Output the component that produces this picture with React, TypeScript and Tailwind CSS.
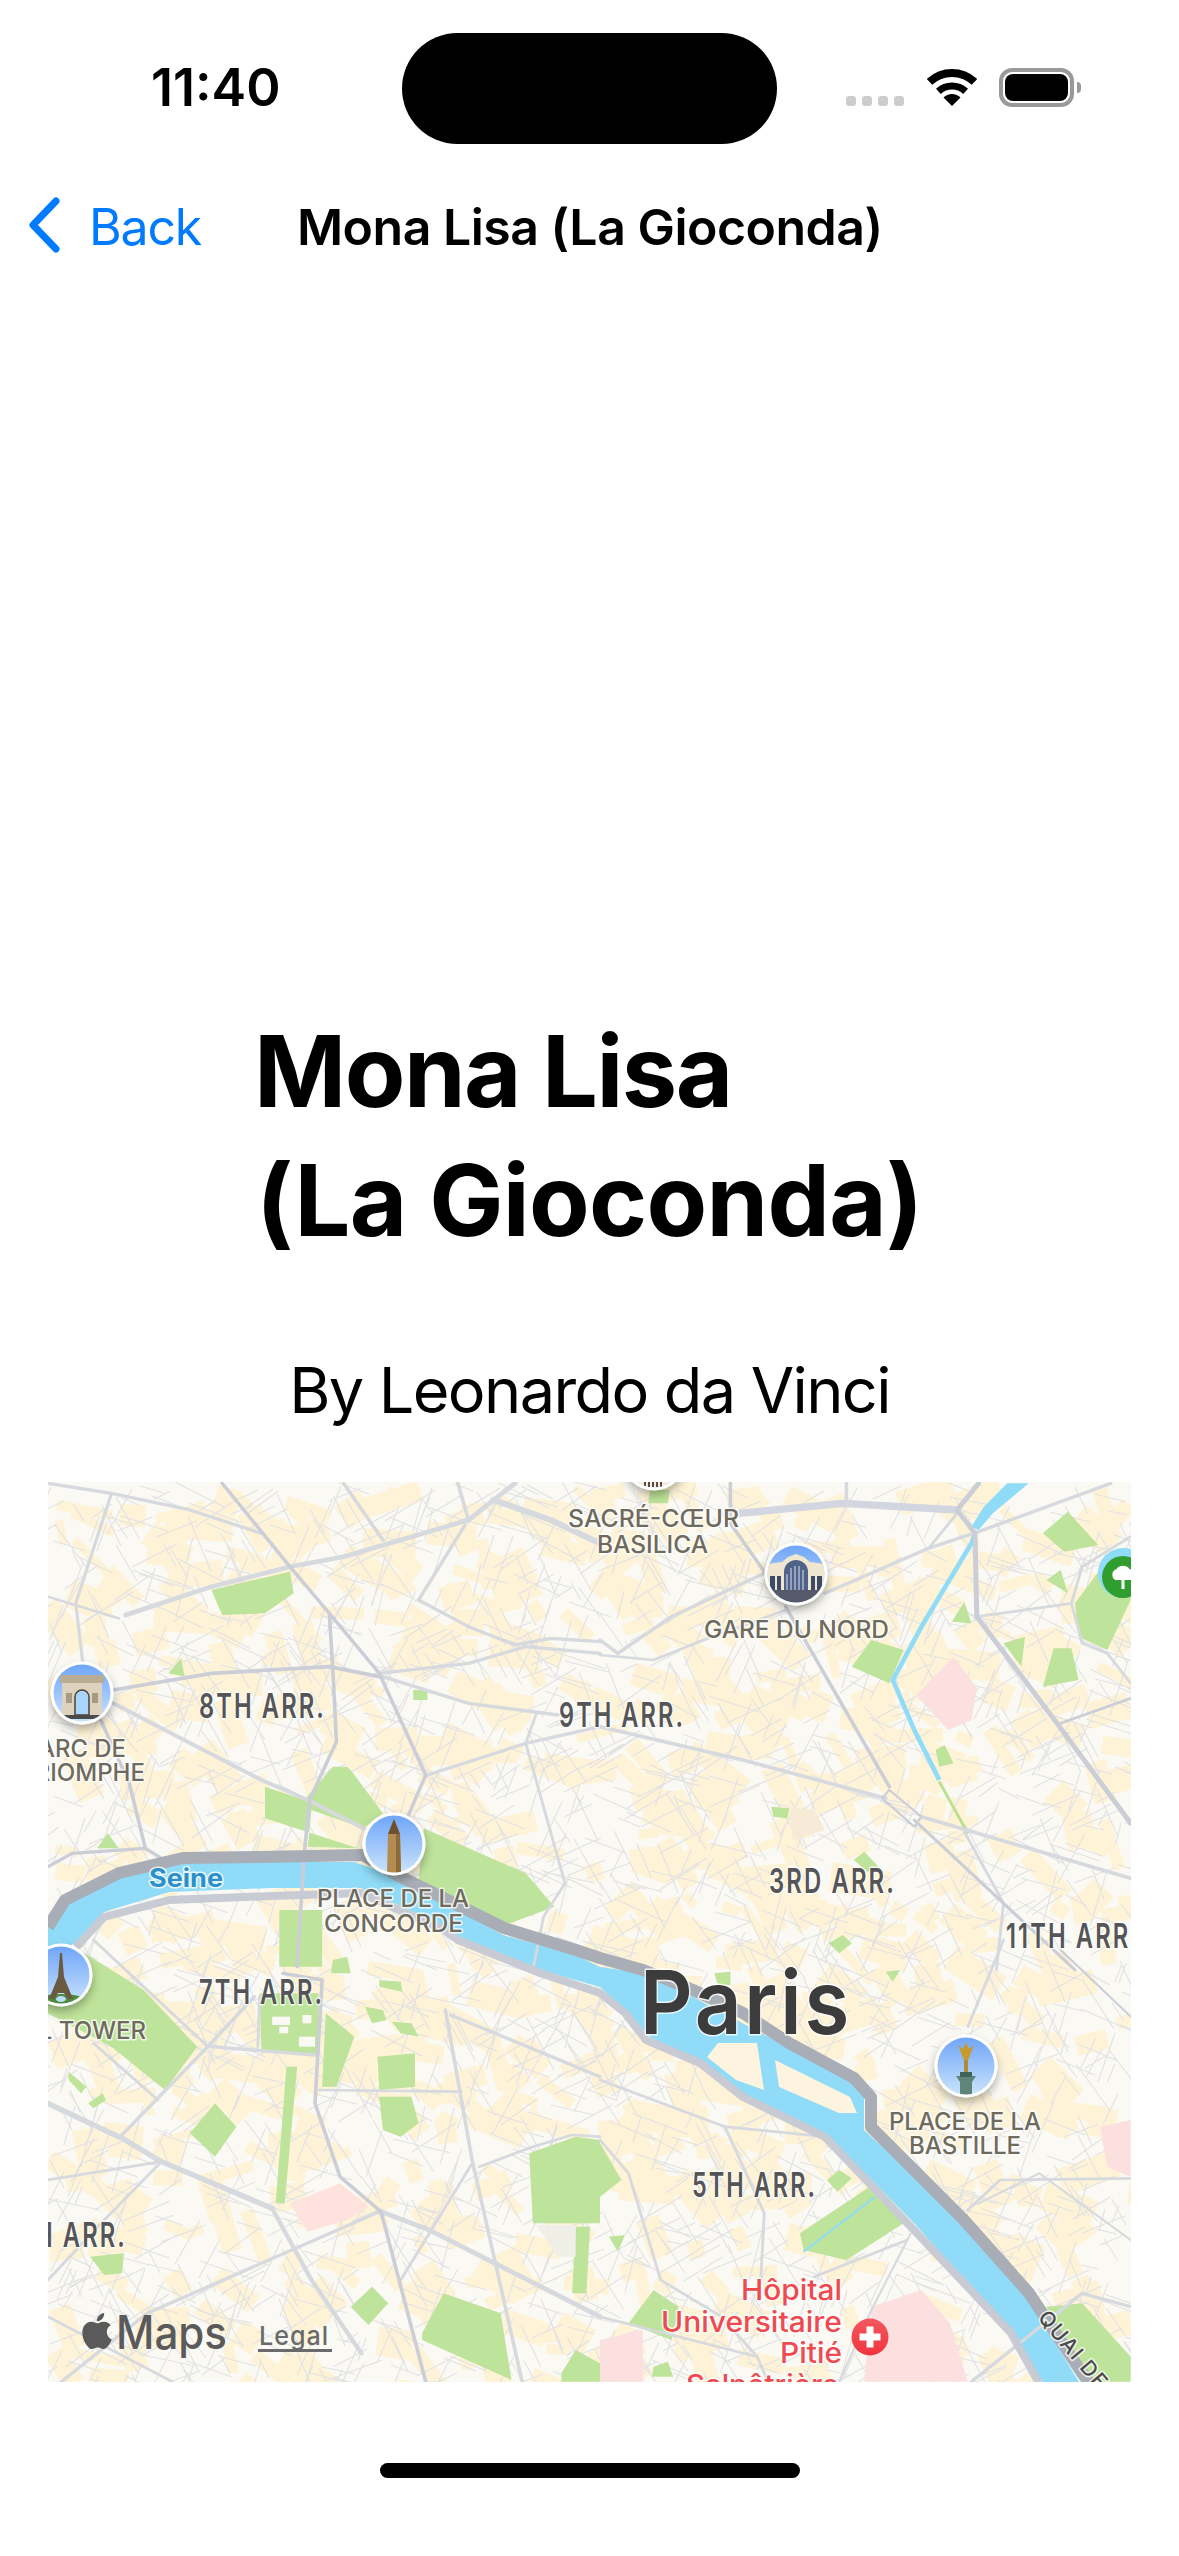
import React from 'react';

// quadrant transforms: the map coordinates below were read off four crops of the map
const QA = 'translate(40 1470) scale(0.35714 0.33333)';
const QB = 'translate(600 1470) scale(0.35714 0.33333)';
const QC = 'translate(40 1940) scale(0.35714 0.33333)';
const QD = 'translate(600 1940) scale(0.35714 0.33333)';

const ROAD = '#D6D9DD';
const DARK = '#CBCDD7';

type Road = [string, number, string?];

const roadsA: Road[] = [
  ['22,40 200,70 420,120 620,190', 10],
  ['200,70 100,400 120,580', 9],
  ['22,380 220,445', 8],
  ['240,435 480,350 700,290 850,260 1200,150 1270,90 1330,40', 14],
  ['1270,90 1430,150 1568,220', 18],
  ['1170,40 1200,150', 10],
  ['850,40 960,210', 10],
  ['950,610 1200,580 1360,530 1568,550', 10],
  ['960,620 1200,700 1450,735', 10],
  ['1060,390 1190,165', 10],
  ['1060,390 1200,470 1330,525 1430,505 1568,515', 10],
  ['1085,915 1360,820 1568,770', 10],
  ['1390,730 1360,820 1470,1240 1410,1340 1380,1500', 8],
  ['205,700 620,930 750,990 905,1075', 12],
  ['510,40 700,290 810,430 950,610 1080,915 1030,1040', 10, DARK],
  ['810,430 820,600 830,815 755,990 740,1150 720,1490', 10, DARK],
  ['205,660 480,610 810,590 950,620', 11, DARK],
  ['170,750 250,940 295,1135 340,1165', 10, DARK],
  ['22,1190 90,1150 295,1135', 10, DARK],
];

const roadsB: Road[] = [
  ['390,130 680,100 1000,120', 22, '#D3D6E0'],
  ['690,40 690,100', 10],
  ['1000,130 920,235', 8],
  ['1430,40 1060,185 920,235 630,370', 10],
  ['460,310 200,440 50,550 0,510', 10],
  ['0,555 150,570 290,510 520,420', 8],
  ['1055,440 1320,400', 8],
  ['1486,200 1350,290 1320,400 1350,520 1420,550 1486,640', 8],
  ['1290,760 1486,685', 8, DARK],
  ['0,770 400,870 800,985', 11],
  ['900,1040 1486,1225', 11],
  ['1020,1085 1130,1300 1110,1500', 8],
  ['365,40 365,160 470,320', 10, DARK],
  ['520,410 810,950', 10, DARK],
  ['1060,40 1000,120 1050,190 1055,440 1280,760 1486,1060', 14, DARK],
  ['790,985 880,1070 900,1040 810,960 790,985', 6, DARK],
  ['880,1050 1130,1300 1330,1500', 9, DARK],
];

const roadsC: Road[] = [
  ['150,0 470,320', 8],
  ['600,170 470,320 225,590', 10],
  ['480,320 770,345', 10],
  ['150,310 330,480', 8],
  ['22,490 230,595 340,665 650,805', 16],
  ['22,720 340,665', 8],
  ['340,665 180,840 22,1020', 8],
  ['650,805 760,1020 900,1240', 12],
  ['780,450 1180,455', 8],
  ['1150,225 1568,410', 10],
  ['22,1130 370,1325', 8],
  ['950,815 300,1120 60,1325', 10],
  ['955,815 1090,870 1568,1130', 14],
  ['1210,670 1090,880 1010,1020', 8],
  ['1230,680 1380,620 1490,585 1568,590', 8],
  ['615,170 610,320', 8],
  ['680,100 790,120 770,490 840,710 955,815 1080,1325', 10, DARK],
  ['1135,210 1210,660 1350,1325', 10],
];

const roadsD: Road[] = [
  ['0,420 350,560 630,590', 8],
  ['350,560 460,820 450,1020', 8],
  ['0,600 80,700 170,1020 340,1130 440,1250 470,1325', 8],
  ['0,1130 440,1250', 8],
  ['600,1010 860,900', 8],
  ['870,880 760,1110 670,1325', 6],
  ['1030,810 1120,720 1486,715', 8],
  ['1030,260 1130,0', 8],
  ['1290,30 1486,230', 6, DARK],
  ['1040,1325 1350,1060 1486,1100', 10],
  ['1060,790 1230,700 1486,900', 6],
];

const parksA = [
  '480,360 700,305 710,370 630,430 510,435',
  '630,950 740,990 820,890 860,890 870,900 960,1030 905,1075 760,1020 750,1130 890,1135 630,1045',
  '1075,1075 1360,1210 1440,1310 1290,1370 1060,1230',
  '360,610 395,565 405,620',
  '1045,660 1085,660 1085,690 1045,690',
  '160,1135 190,1090 220,1135',
  '670,1320 790,1320 790,1490 670,1490',
];
const parksB = [
  '1240,190 1310,125 1395,225 1300,245',
  '1250,330 1290,300 1310,370',
  '705,590 760,510 850,540 810,640',
  '985,455 1020,395 1040,460',
  '1130,520 1190,500 1180,590',
  '1240,650 1270,535 1320,535 1340,630',
  '1330,400 1420,270 1486,260 1486,390 1420,540 1340,500',
  '940,840 965,825 990,880 950,890',
  '480,1010 530,1015 525,1045 485,1040',
  '710,1170 740,1145 780,1190 750,1205',
  '640,1420 680,1395 705,1420 670,1450',
  '140,60 195,60 190,100 135,100',
];
const parksC = [
  '110,30 290,150 440,320 350,450 200,320 22,220 22,120',
  '615,160 780,160 780,350 620,330',
  '800,220 880,290 830,440 790,440',
  '945,350 1050,340 1050,440 950,450',
  '950,470 1040,470 1060,550 1010,590 960,570',
  '420,580 490,490 550,560 490,650',
  '690,380 720,380 685,790 660,790',
  '1370,640 1500,590 1568,600 1568,850 1380,850',
  '1500,860 1540,860 1530,1060 1490,1060',
  '1070,1180 1130,1060 1290,1120 1320,1320 1070,1200',
  '870,1100 930,1040 975,1090 920,1155',
  '1460,1300 1500,1230 1568,1270 1568,1325 1460,1325',
  '140,950 235,940 230,1000 180,1005',
  '910,200 960,210 970,240 930,250',
  '985,245 1040,250 1060,290 1010,280',
  '950,120 1010,125 1015,155 950,140',
  '820,60 860,50 870,100 815,100',
  '80,395 130,440 115,460 80,420',
  '135,490 175,460 185,480 150,505',
];
const parksD = [
  '560,880 770,730 850,850 690,960 570,930',
  '0,610 60,720 0,770',
  '80,1150 150,1050 220,1100 200,1200',
  '1250,1100 1350,1090 1486,1250 1486,1325 1370,1325 1280,1170',
  '310,350 350,340 340,400',
  '405,400 450,400 460,450 420,445',
  '635,720 670,690 705,715 665,755',
  '150,1280 190,1265 205,1310 145,1310',
  '25,890 70,885 50,935',
  '320,100 365,95 365,135 330,135',
  '800,95 840,90 820,125',
];
const parkWhite = ['650,230 700,230 700,255 650,255', '735,225 760,225 760,250 735,250', '670,260 695,260 695,280 670,280', '725,290 770,290 770,320 725,320'];
const pinkC = ['700,790 840,730 920,800 860,840 750,875'];
const pinkB = ['990,560 1055,655 1040,750 975,780 885,675'];
const pinkD = [
  '760,1100 900,1050 980,1150 1030,1325 740,1325',
  '0,1200 120,1170 120,1325 0,1325',
  '1400,560 1486,540 1486,710 1420,680',
  '300,300 380,290 345,345',
];

// page coordinates
const SEINE =
  '40,1930 66,1902 122,1875 183,1862 354,1862 400,1878 503,1935 576,1955 600,1967 643,1973 693,1997 761,2033 850,2080 864,2097 864,2130 911,2173 961,2223 1025,2293 1079,2382 1043,2382 1011,2333 914,2223 825,2133 743,2097 700,2063 650,2037 625,2010 600,1987 540,1970 458,1936 444,1926 361,1888 272,1888 169,1892 104,1912 76,1942 40,1965';
const QUAY_N =
  '48,1927 65,1900 119,1873 183,1858 261,1857 363,1855 397,1875 504,1928 576,1950 600,1958 643,1970 693,1990 743,2013 789,2043 854,2078 871,2097 871,2127 914,2170 964,2220 1029,2293 1082,2373 1095,2390';
const QUAY_S =
  '76,1947 104,1917 169,1900 272,1896 361,1893 444,1930 458,1940 540,1973 600,1993 625,2013 646,2040 700,2063 743,2097 825,2137 914,2230 1011,2333 1039,2383';
const ISLANDS = [
  '775,2060 850,2097 857,2113 839,2113 779,2087',
  '718,2043 757,2043 764,2090 736,2080 707,2057',
];

// seeded noise for the fine street mesh and the yellow built-up blocks
let seed = 7;
const rnd = () => {
  seed = (seed * 16807) % 2147483647;
  return seed / 2147483647;
};

const blocks: string[] = [];
for (let i = 0; i < 1100; i++) {
  const x = 48 + rnd() * 1083;
  const y = 1482 + rnd() * 900;
  if (rnd() < (y > 2180 ? 0.4 : x > 950 ? 0.35 : 0)) continue;
  const a = (rnd() - 0.5) * 1.8 + 0.5;
  const l = 16 + rnd() * 44;
  const w = 8 + rnd() * 22;
  const c = Math.cos(a);
  const s = Math.sin(a);
  blocks.push(
    `M${x.toFixed(0)} ${y.toFixed(0)}l${(l * c).toFixed(0)} ${(l * s).toFixed(0)}l${(-w * s).toFixed(0)} ${(w * c).toFixed(0)}l${(-l * c).toFixed(0)} ${(-l * s).toFixed(0)}z`,
  );
}

let mesh = '';
for (const base of [0.35, 1.05, 1.95, 2.65]) {
  for (let i = 0; i < 620; i++) {
    const x = 48 + rnd() * 1083;
    const y = 1482 + rnd() * 900;
    const a = base + (rnd() - 0.5) * 0.3;
    const l = 18 + rnd() * 42;
    mesh += `M${x.toFixed(0)} ${y.toFixed(0)}l${(Math.cos(a) * l).toFixed(0)} ${(Math.sin(a) * l).toFixed(0)}`;
  }
}

const Roads = ({ items, t }: { items: Road[]; t: string }) => (
  <g transform={t} fill="none" strokeLinejoin="round" strokeLinecap="round">
    {items.map(([pts, w, c], i) => (
      <polyline key={i} points={pts} stroke={c ?? ROAD} strokeWidth={w} />
    ))}
  </g>
);

const Areas = ({ items, t, fill }: { items: string[]; t: string; fill: string }) => (
  <g transform={t} fill={fill}>
    {items.map((pts, i) => (
      <polygon key={i} points={pts} />
    ))}
  </g>
);

const Label = ({
  x,
  y,
  w,
  size = 24,
  weight = 500,
  fill = '#6E6A5C',
  spacing = 0,
  children,
}: {
  x: number;
  y: number;
  w: number;
  size?: number;
  weight?: number;
  fill?: string;
  spacing?: number;
  children: string;
}) => (
  <text x={x} y={y} textLength={w} lengthAdjust="spacingAndGlyphs" fontSize={size} fontWeight={weight} fill={fill} letterSpacing={spacing}>
    {children}
  </text>
);

const Arr = ({ x, y, w, children }: { x: number; y: number; w: number; children: string }) => (
  <Label x={x} y={y} w={w} size={34} weight={600} fill="#555558" spacing={3}>
    {children}
  </Label>
);

const Pin = ({ x, y, id, children }: { x: number; y: number; id: string; children: React.ReactNode }) => (
  <g transform={`translate(${x} ${y})`}>
    <circle r="31.5" fill="#fff" filter="url(#pinShadow)" />
    <clipPath id={id}>
      <circle r="28.5" />
    </clipPath>
    <g clipPath={`url(#${id})`}>
      <rect x="-31" y="-31" width="62" height="62" fill="url(#sky)" />
      {children}
    </g>
  </g>
);

const ParisMap = () => (
  <svg viewBox="48 1482 1083 900" className="block h-full w-full font-[Inter]">
    <defs>
      <linearGradient id="sky" x1="0" y1="0" x2="0" y2="1">
        <stop offset="0" stopColor="#6CA3F8" />
        <stop offset="1" stopColor="#CDE6FC" />
      </linearGradient>
      <linearGradient id="red" x1="0" y1="0" x2="0" y2="1">
        <stop offset="0" stopColor="#F4575E" />
        <stop offset="1" stopColor="#F0343E" />
      </linearGradient>
      <filter id="pinShadow" x="-40%" y="-40%" width="180%" height="190%">
        <feDropShadow dx="0" dy="5" stdDeviation="5" floodColor="#000" floodOpacity="0.3" />
      </filter>
    </defs>

    <rect x="48" y="1482" width="1083" height="900" fill="#FAF9F3" />
    <path d={blocks.join('')} fill="#FEF3D6" />
    <path d={mesh} fill="none" stroke="#E2E2E4" strokeWidth="1.1" />

    <Areas items={parksA} t={QA} fill="#BEE39A" />
    <Areas items={parksB} t={QB} fill="#BEE39A" />
    <Areas items={parksC} t={QC} fill="#BEE39A" />
    <Areas items={parksD} t={QD} fill="#BEE39A" />
    <Areas items={parkWhite} t={QC} fill="#FAF9F3" />
    <Areas items={pinkB} t={QB} fill="#FCE0E0" />
    <Areas items={pinkC} t={QC} fill="#FDE2DE" />
    <Areas items={pinkD} t={QD} fill="#FCE0E0" />
    <Areas items={['530,1010 600,1020 630,1080 540,1110']} t={QB} fill="#F7EBD8" />
    <Areas items={['1390,855 1500,855 1500,950 1450,950']} t={QC} fill="#EFEFE8" />

    {/* water */}
    <polygon points={SEINE} fill="#8FDBF8" />
    {ISLANDS.map((pts, i) => (
      <polygon key={i} points={pts} fill="#FCF4DF" />
    ))}
    <g transform={QB} fill="none" stroke="#8FDBF8" strokeLinejoin="round">
      <polygon points="1140,40 1200,40 1100,130 1060,180 1040,170 1075,110" fill="#8FDBF8" stroke="none" />
      <polyline points="1050,190 1040,220 900,470 820,630 880,780 950,930" strokeWidth="13" />
      <polyline points="950,935 1030,1090" strokeWidth="8" stroke="#B7E08F" />
    </g>
    <polyline transform={QD} points="570,935 770,770" fill="none" stroke="#8FDBF8" strokeWidth="6" />

    <Roads items={roadsA} t={QA} />
    <Roads items={roadsB} t={QB} />
    <Roads items={roadsC} t={QC} />
    <Roads items={roadsD} t={QD} />

    <polyline points={QUAY_S} fill="none" stroke="#C8CAD4" strokeWidth="8" strokeLinejoin="round" />
    <polyline points={QUAY_N} fill="none" stroke="#A9ADB5" strokeWidth="12" strokeLinejoin="round" />

    {/* pins */}
    <Pin x={654} y={1459} id="pinSacre">
      <rect x="-28" y="16" width="56" height="14" fill="#F3EDE2" />
      <path d="M-9 20v8M-5 20v8M-1 20v8M3 20v8M7 20v8" stroke="#5A4A42" strokeWidth="2" />
    </Pin>
    <Pin x={82} y={1693} id="pinArc">
      <rect x="-20" y="-16" width="40" height="38" fill="#DCD2BE" />
      <rect x="-22" y="-18" width="44" height="8" fill="#B8AC94" />
      <path d="M-7 22V4a7 7 0 0 1 14 0v18z" fill="#A9D4FB" stroke="#4B4335" strokeWidth="1.5" />
      <rect x="-20" y="22" width="40" height="4" fill="#4A4A4A" />
      <rect x="-16" y="0" width="6" height="10" fill="#A69A82" />
      <rect x="10" y="0" width="6" height="10" fill="#A69A82" />
    </Pin>
    <Pin x={394} y={1844} id="pinObelisk">
      <polygon points="-7,29 -6,-10 0,-25 6,-10 7,29" fill="#B48C52" />
      <polygon points="-6,-10 0,-25 6,-10" fill="#6D5030" />
      <polygon points="2,29 2,-10 6,-10 7,29" fill="#8E6C3A" />
    </Pin>
    <Pin x={61} y={1975} id="pinEiffel">
      <ellipse cx="0" cy="30" rx="30" ry="11" fill="#4F8A3C" />
      <path d="M-1 -22h2l2 24 9 22h-5l-4-6h-6l-4 6h-5l9-22z" fill="#6B5A40" />
      <ellipse cx="0" cy="24" rx="5" ry="3" fill="#BBDCFB" />
    </Pin>
    <Pin x={796} y={1574} id="pinGare">
      <polygon points="-30,-10 -14,-12 -8,-17 0,-20 8,-17 14,-12 30,-10 30,18 -30,18" fill="#EFE6D0" />
      <path d="M-12 16V-2a12 12 0 0 1 24 0v18z" fill="#50628A" />
      <path d="M-9 16V0M-5 16V-6M-1 16V-8M3 16V-8M7 16V-4" stroke="#DDE3EE" strokeWidth="1" />
      <path d="M-26 2h5v14h-5zM-19 2h4v14h-4zM15 2h4v14h-4zM21 2h5v14h-5z" fill="#3D4A68" />
      <rect x="-30" y="16" width="60" height="16" fill="#55596A" />
    </Pin>
    <Pin x={966} y={2066} id="pinBastille">
      <path d="M-2 -6l-6 -15 5 4 3-7 3 7 5-4-6 15z" fill="#C79A2C" />
      <rect x="-2" y="-6" width="4" height="12" fill="#B08A34" />
      <path d="M-10 10h20l-4 6v16h-12v-16z" fill="#5E8578" />
      <rect x="-6" y="6" width="12" height="5" fill="#3F6456" />
    </Pin>
    <g transform="translate(1123 1577)">
      <circle r="25" cy="-4" fill="#8FDBF8" />
      <circle r="21" fill="#2F9E2F" />
      <path d="M-1.5 12V3h-6a6 6 0 0 1 1-11a8 8 0 0 1 13 0a6 6 0 0 1 1 11h-6v9z" fill="#fff" />
    </g>
    <g transform="translate(870 2337)">
      <circle r="18.5" fill="url(#red)" />
      <path d="M-3.5 -10.5h7v7h7v7h-7v7h-7v-7h-7v-7h7z" fill="#fff" />
    </g>

    {/* labels */}
    <g stroke="#fff" strokeOpacity="0.8" strokeWidth="3" strokeLinejoin="round" className="[paint-order:stroke]">
      <Label x={568} y={1527} w={171}>SACRÉ-CŒUR</Label>
      <Label x={597} y={1553} w={111}>BASILICA</Label>
      <Label x={704} y={1638} w={185}>GARE DU NORD</Label>
      <Label x={38} y={1757} w={88}>ARC DE</Label>
      <Label x={19} y={1781} w={126}>TRIOMPHE</Label>
      <Label x={317} y={1907} w={152}>PLACE DE LA</Label>
      <Label x={324} y={1932} w={139}>CONCORDE</Label>
      <Label x={-25} y={2039} w={171}>EIFFEL TOWER</Label>
      <Label x={889} y={2130} w={152}>PLACE DE LA</Label>
      <Label x={909} y={2154} w={112}>BASTILLE</Label>

      <Arr x={199} y={1718} w={127}>8TH ARR.</Arr>
      <Arr x={559} y={1727} w={126}>9TH ARR.</Arr>
      <Arr x={769} y={1893} w={127}>3RD ARR.</Arr>
      <Arr x={1006} y={1948} w={134}>11TH ARR.</Arr>
      <Arr x={199} y={2004} w={125}>7TH ARR.</Arr>
      <Arr x={0} y={2247} w={127}>6TH ARR.</Arr>
      <Arr x={692} y={2197} w={125}>5TH ARR.</Arr>

      <Label x={640} y={2034} w={212} size={88} weight={600} fill="#3C3C3C" spacing={3}>Paris</Label>

      <Label x={149} y={1887} w={74} size={25} weight={700} fill="#2E8FC9">Seine</Label>

      <Label x={741} y={2300} w={101} size={28} fill="#EE4A50">Hôpital</Label>
      <Label x={661} y={2332} w={181} size={28} fill="#EE4A50">Universitaire</Label>
      <Label x={780} y={2363} w={62} size={28} fill="#EE4A50">Pitié</Label>
      <Label x={686} y={2395} w={153} size={28} fill="#EE4A50">Salpêtrière</Label>

      <text transform="translate(1037 2318) rotate(50)" fontSize="21" fontWeight="500" letterSpacing="1.5" fill="#4A4A4A">
        QUAI DE
      </text>
    </g>

    {/* attribution */}
    <path
      transform="translate(79 2313) scale(1.5)"
      fill="#5A5A5A"
      d="M12.152 6.896c-.948 0-2.415-1.078-3.96-1.04-2.04.027-3.91 1.183-4.961 3.014-2.117 3.675-.546 9.103 1.519 12.09 1.013 1.454 2.208 3.09 3.792 3.039 1.52-.065 2.09-.987 3.935-.987 1.831 0 2.35.987 3.96.948 1.637-.026 2.676-1.48 3.676-2.948 1.156-1.688 1.636-3.325 1.662-3.415-.039-.013-3.182-1.221-3.22-4.857-.026-3.04 2.48-4.494 2.597-4.559-1.429-2.09-3.623-2.324-4.39-2.376-2-.156-3.675 1.09-4.61 1.09zM15.53 3.83c.843-1.012 1.4-2.427 1.245-3.83-1.207.052-2.662.805-3.532 1.818-.78.896-1.454 2.338-1.273 3.714 1.338.104 2.715-.688 3.559-1.701"
    />
    <Label x={116} y={2349} w={111} size={46} weight={500} fill="#5A5A5A">Maps</Label>
    <Label x={259} y={2345} w={70} size={26} weight={500} fill="#6A6A6A" spacing={1}>Legal</Label>
    <rect x="258" y="2349" width="74" height="3" fill="#6A6A6A" />
  </svg>
);

export default function App() {
  return (
    <div className="flex h-[2556px] w-[1179px] flex-col overflow-hidden bg-white font-[Inter] text-black">
      {/* status bar */}
      <div className="mt-[33px] flex h-[111px] items-start">
        <div className="w-[402px] pl-[151px] pt-[30px] text-[52px] font-semibold leading-[50px]">11:40</div>
        <div className="h-[111px] w-[375px] rounded-full bg-black" />
        <div className="ml-[69px] mt-[63px] flex gap-[6px]">
          <span className="h-[10px] w-[10px] rounded-[3px] bg-[#CDCDCD]" />
          <span className="h-[10px] w-[10px] rounded-[3px] bg-[#CDCDCD]" />
          <span className="h-[10px] w-[10px] rounded-[3px] bg-[#CDCDCD]" />
          <span className="h-[10px] w-[10px] rounded-[3px] bg-[#CDCDCD]" />
        </div>
        <svg viewBox="0 0 50 37" className="ml-[23px] mt-[36px] h-[37px] w-[50px]">
          <path d="M2.5 12.9A33 33 0 0 1 47.5 12.9" fill="none" stroke="#000" strokeWidth="8" />
          <path d="M11.4 22.4A20 20 0 0 1 38.6 22.4" fill="none" stroke="#000" strokeWidth="7" />
          <path d="M25 37L16.5 28.5A12 12 0 0 1 33.5 28.5z" fill="#000" />
        </svg>
        <div className="ml-[22px] mt-[35px] h-[39px] w-[75px] rounded-[13px] border-[4px] border-[#999999] p-[2px]">
          <div className="h-full w-full rounded-[8px] bg-black" />
        </div>
        <div className="ml-[3px] mt-[49px] h-[11px] w-[4px] rounded-r-full bg-[#999999]" />
      </div>

      {/* nav bar */}
      <div className="mt-[50px] flex h-[66px] items-center">
        <svg viewBox="0 0 32 56" className="ml-[28px] -mt-[4px] h-[56px] w-[32px]">
          <path d="M28 4L5 28L28 52" fill="none" stroke="#007AFF" strokeWidth="7" strokeLinecap="round" strokeLinejoin="round" />
        </svg>
        <span className="ml-[29px] text-[50px] leading-[66px] tracking-[-1.2px] text-[#007AFF]">Back</span>
        <span className="ml-[96px] text-[50px] font-semibold leading-[66px] tracking-[-0.5px]">Mona Lisa (La Gioconda)</span>
      </div>

      {/* heading */}
      <h1 className="ml-[254px] mt-[747px] text-[99px] font-bold leading-[129px]">
        <div className="tracking-[-1.5px]">Mona Lisa</div>
        <div className="ml-[2px] tracking-[-0.7px]">(La Gioconda)</div>
      </h1>
      <p className="mt-[87px] text-center text-[63px] leading-[76px] tracking-[-1.6px]">By Leonardo da Vinci</p>

      {/* map */}
      <div className="ml-[48px] mt-[54px] h-[900px] w-[1083px] overflow-hidden">
        <ParisMap />
      </div>

      {/* home indicator */}
      <div className="mx-auto mt-[81px] h-[15px] w-[420px] rounded-full bg-black" />
    </div>
  );
}
